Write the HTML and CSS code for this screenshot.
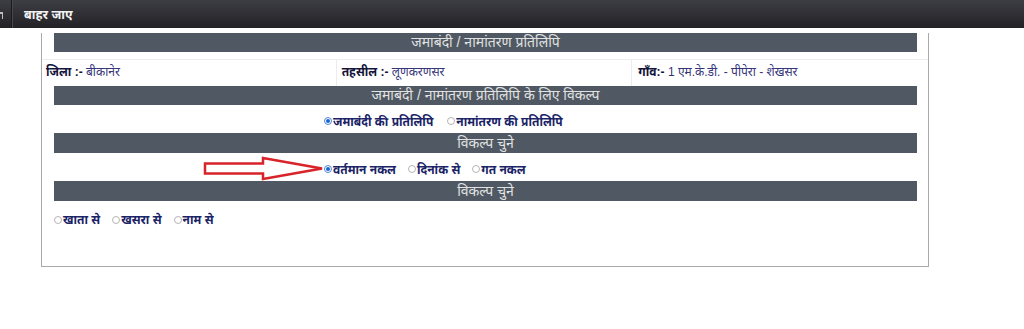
FILE: index.html
```html
<!DOCTYPE html>
<html lang="hi">
<head>
<meta charset="utf-8">
<title>जमाबंदी / नामांतरण प्रतिलिपि</title>
<link rel="stylesheet" href="styles.css">
</head>
<body>
<div class="nav">
  <span class="nav-prev"></span>
  <span class="nav-sep"></span>
  <span class="nav-item">बाहर जाए</span>
</div>
<div class="panel">
  <div class="bar bar-first">जमाबंदी / नामांतरण प्रतिलिपि</div>
  <div class="info">
    <div class="info-cell"><b>जिला :-</b> <span class="val">बीकानेर</span></div>
    <div class="info-cell"><b>तहसील :-</b> <span class="val">लूणकरणसर</span></div>
    <div class="info-cell"><b>गाँव:-</b> <span class="val">1 एम.के.डी. - पीपेरा - शेखसर</span></div>
  </div>
  <div class="bar bar-2">जमाबंदी / नामांतरण प्रतिलिपि के लिए विकल्प</div>
  <div class="row row-mid">
    <label class="opt"><span class="radio checked"></span>जमाबंदी की प्रतिलिपि</label>
    <label class="opt opt-wide"><span class="radio"></span>नामांतरण की प्रतिलिपि</label>
  </div>
  <div class="bar">विकल्प चुने</div>
  <div class="row row-mid arrow-row">
    <svg class="arrow" width="124" height="26" viewBox="0 0 124 26">
      <path d="M2 7.5 H60 V2 L119 12.5 L60 23 V17.5 H2 Z" fill="#fff" stroke="#d8232a" stroke-width="2.5" stroke-linejoin="miter"/>
    </svg>
    <label class="opt"><span class="radio checked"></span>वर्तमान नकल</label>
    <label class="opt"><span class="radio"></span>दिनांक से</label>
    <label class="opt"><span class="radio"></span>गत नकल</label>
  </div>
  <div class="bar">विकल्प चुने</div>
  <div class="row row-left">
    <label class="opt"><span class="radio"></span>खाता से</label>
    <label class="opt"><span class="radio"></span>खसरा से</label>
    <label class="opt"><span class="radio"></span>नाम से</label>
  </div>
</div>
</body>
</html>
```
FILE: styles.css
```css
*, *::before, *::after {
  box-sizing: border-box;
}
html, body {
  margin: 0;
  padding: 0;
  background: #fff;
  font-family: "Liberation Sans", "Noto Sans", "Noto Sans Devanagari", sans-serif;
}
.nav {
  height: 28px;
  background: linear-gradient(#3d3d44, #222226);
  display: flex;
  align-items: center;
  color: #f2f2f2;
  font-size: 12.5px;
  font-weight: bold;
  overflow: hidden;
}
.nav-prev {
  width: 3px;
  height: 7px;
  margin-top: 2px;
  border-top: 2px solid #bdbdc2;
  border-right: 1px solid #bdbdc2;
}
.nav-sep {
  width: 2px;
  height: 28px;
  background: #1a1a1d;
  border-right: 1px solid #48484e;
  margin-left: 8px;
}
.nav-item {
  margin-left: 11px;
}
.panel {
  margin-left: 41px;
  width: 888px;
  height: 234px;
  border: 1px solid #a9a9a9;
  border-top: none;
}
.bar {
  margin: 0 11px 0 12px;
  height: 20px;
  background: #505963;
  color: #e2e2e2;
  font-size: 14px;
  line-height: 20px;
  text-align: center;
}
.bar-first {
  margin-top: 5px;
  height: 19px;
  line-height: 19px;
}
.bar-2 {
  height: 19px;
  line-height: 19px;
}
.info {
  margin-top: 7px;
  display: flex;
  height: 27px;
  border-top: 1px solid #ededed;
  font-size: 12px;
  line-height: 25px;
  color: #1c1c3c;
}
.info-cell {
  flex: 1;
  padding-left: 4px;
  border-right: 1px solid #ececec;
}
.info-cell:last-child {
  border-right: none;
  padding-left: 6px;
}
.info-cell:nth-child(2) {
  padding-left: 5px;
}
.info b {
  color: #14143a;
}
.val {
  color: #34347a;
}
.row {
  height: 28px;
  display: flex;
  align-items: center;
  gap: 12px;
  padding-top: 4px;
  font-size: 12px;
  font-weight: bold;
  color: #1a2366;
}
.row-mid {
  padding-left: 282px;
}
.opt-wide {
  margin-left: 2px;
}
.arrow-row {
  position: relative;
}
.arrow {
  position: absolute;
  left: 161px;
  top: 3px;
}
.row-left {
  padding-left: 12px;
  align-items: flex-start;
  padding-top: 10px;
}
.opt {
  display: flex;
  align-items: center;
}
.radio {
  width: 8px;
  height: 8px;
  border: 1px solid #b5b5b5;
  border-radius: 50%;
  background: #fff;
  margin-right: 1px;
  position: relative;
}
.radio.checked {
  border-color: #4f86d9;
}
.radio.checked::after {
  content: "";
  position: absolute;
  left: 1px;
  top: 1px;
  width: 4px;
  height: 4px;
  border-radius: 50%;
  background: #1565d8;
}
```
